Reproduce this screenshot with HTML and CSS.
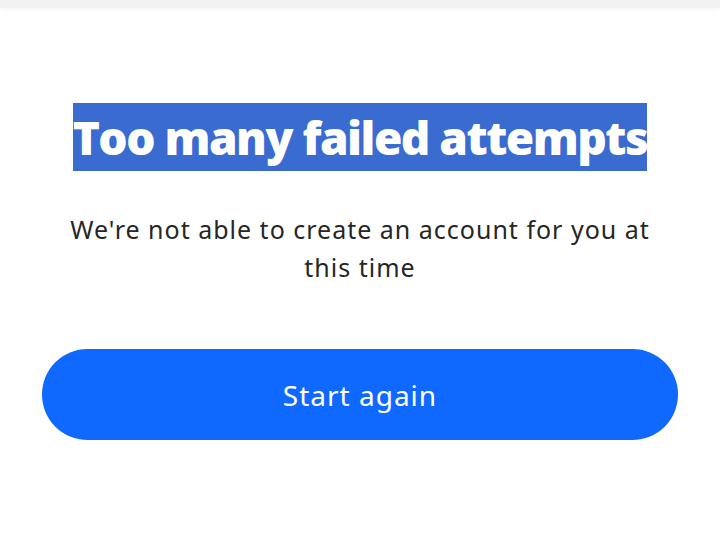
FILE: index.html
```html
<!DOCTYPE html>
<html lang="en">
<head>
<meta charset="utf-8">
<title>Too many failed attempts</title>
<link rel="stylesheet" href="styles.css">
</head>
<body>
<div class="topbar"></div>
<main class="card">
  <h1 class="title"><span class="sel">Too many failed attempts</span></h1>
  <p class="message">We're not able to create an account for you at this time</p>
  <button class="btn" type="button">Start again</button>
</main>
</body>
</html>
```
FILE: styles.css
```css
html, body {
  margin: 0;
  padding: 0;
  background: #ffffff;
}
body {
  font-family: "Open Sans", "Noto Sans", sans-serif;
  color: #262626;
}
.topbar {
  height: 8px;
  background: #f2f2f2;
  box-shadow: 0 2px 4px rgba(0,0,0,0.03);
}
.card {
  display: flex;
  flex-direction: column;
  align-items: center;
  padding: 96px 42px 0;
}
.title {
  margin: 0;
  font-family: "Open Sans", sans-serif;
  font-weight: 800;
  font-size: 46px;
  line-height: 67px;
  letter-spacing: -1.5px;
  text-align: center;
}
.sel {
  background: #3a6bd1;
  color: #ffffff;
  padding: 3px 0 3px;
}
.message {
  margin: 39px 0 0;
  max-width: 604px;
  font-family: "Noto Sans", sans-serif;
  font-size: 25px;
  line-height: 38px;
  letter-spacing: 1px;
  text-align: center;
  color: #262626;
}
.btn {
  margin-top: 63px;
  width: 636px;
  height: 91px;
  border: none;
  border-radius: 46px;
  background: #0f69ff;
  color: #ffffff;
  font-family: "Noto Sans", sans-serif;
  font-size: 28px;
  letter-spacing: 1px;
  cursor: pointer;
}
```
